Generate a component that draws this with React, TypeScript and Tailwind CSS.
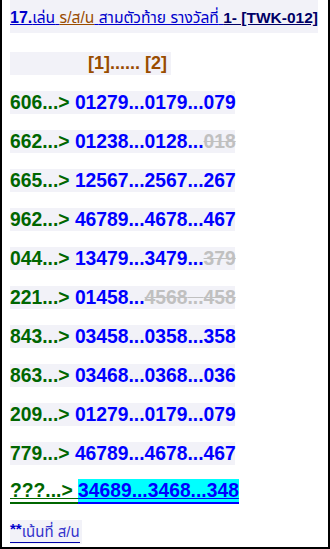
const rows: { key: string; a: string; b: string; c: string; gray?: 'c' | 'bc' }[] = [
  { key: '606', a: '01279', b: '0179', c: '079' },
  { key: '662', a: '01238', b: '0128', c: '018', gray: 'c' },
  { key: '665', a: '12567', b: '2567', c: '267' },
  { key: '962', a: '46789', b: '4678', c: '467' },
  { key: '044', a: '13479', b: '3479', c: '379', gray: 'c' },
  { key: '221', a: '01458', b: '4568', c: '458', gray: 'bc' },
  { key: '843', a: '03458', b: '0358', c: '358' },
  { key: '863', a: '03468', b: '0368', c: '036' },
  { key: '209', a: '01279', b: '0179', c: '079' },
  { key: '779', a: '46789', b: '4678', c: '467' },
];

const thai = '"Liberation Sans", Tahoma, "Noto Sans Thai", sans-serif';

function Row({ row }: { row: (typeof rows)[number] }) {
  const gray = 'text-[#c0c0c0] line-through';
  return (
    <div className="mt-[16px] flex h-[23px] w-[225px] items-center whitespace-pre bg-[#f2f2f8] text-[19.3px] font-bold leading-[23px]">
      <span className="text-[#006600]">{row.key}...&gt; </span>
      <span className="text-[#0000ff]">{row.a}...</span>
      {row.gray === 'bc' ? (
        <span className={gray}>
          {row.b}...{row.c}
        </span>
      ) : (
        <>
          <span className="text-[#0000ff]">{row.b}...</span>
          <span className={row.gray === 'c' ? gray : 'text-[#0000ff]'}>{row.c}</span>
        </>
      )}
    </div>
  );
}

export default function App() {
  return (
    <div
      className="box-border h-[549px] w-[330px] border-x-2 border-b-2 border-black bg-white pl-[8px] pr-[10px]"
      style={{ fontFamily: '"Liberation Sans", Arial, sans-serif' }}
    >
      <div className="flex h-[33px] items-center whitespace-pre bg-[#f2f2f8] pt-[2px]">
        <span className="text-[16px] font-bold text-[#0000cc] underline">17.</span>
        <span className="text-[15.6px] text-[#0000cc] underline" style={{ fontFamily: thai }}>
          เล่น{' '}
        </span>
        <span className="text-[15.6px] text-[#994c00] underline" style={{ fontFamily: thai }}>
          ร/ส/น
        </span>
        <span className="text-[15.6px] text-[#0000cc] underline" style={{ fontFamily: thai }}>
          {' '}สามตัวท้าย รางวัลที่{' '}
        </span>
        <span className="text-[15.5px] font-bold text-[#000066] underline">1- [TWK-012]</span>
      </div>

      <div className="mt-[19px] flex h-[23px] w-[161px] items-center whitespace-pre bg-[#f2f2f8] pl-[78px] text-[18px] font-bold text-[#994c00]">
        [1]...... [2]
      </div>

      <div>
        {rows.map((r) => (
          <Row key={r.key} row={r} />
        ))}
      </div>

      <div className="mt-[15px] flex h-[23px] w-[225px] items-center whitespace-pre text-[19.3px] font-bold leading-[23px]">
        <span className="border-b-2 border-[#006600] text-[#006600] underline">???...&gt; </span>
        <span className="border-b-2 border-[#0000ff] bg-[#00ffff] text-[#0000ff] underline">34689...3468...348</span>
      </div>

      <div className="mt-[17px] flex h-[24px] w-[72px] items-center whitespace-pre bg-[#f2f2f8]">
        <span className="flex items-start border-b border-[#0000aa]">
          <span className="text-[15px] font-bold leading-[14px] text-[#0000cc]">**</span>
          <span className="text-[15px] leading-[20px] text-[#3333cc]" style={{ fontFamily: thai }}>
            เน้นที่ ส/น
          </span>
        </span>
      </div>
    </div>
  );
}
